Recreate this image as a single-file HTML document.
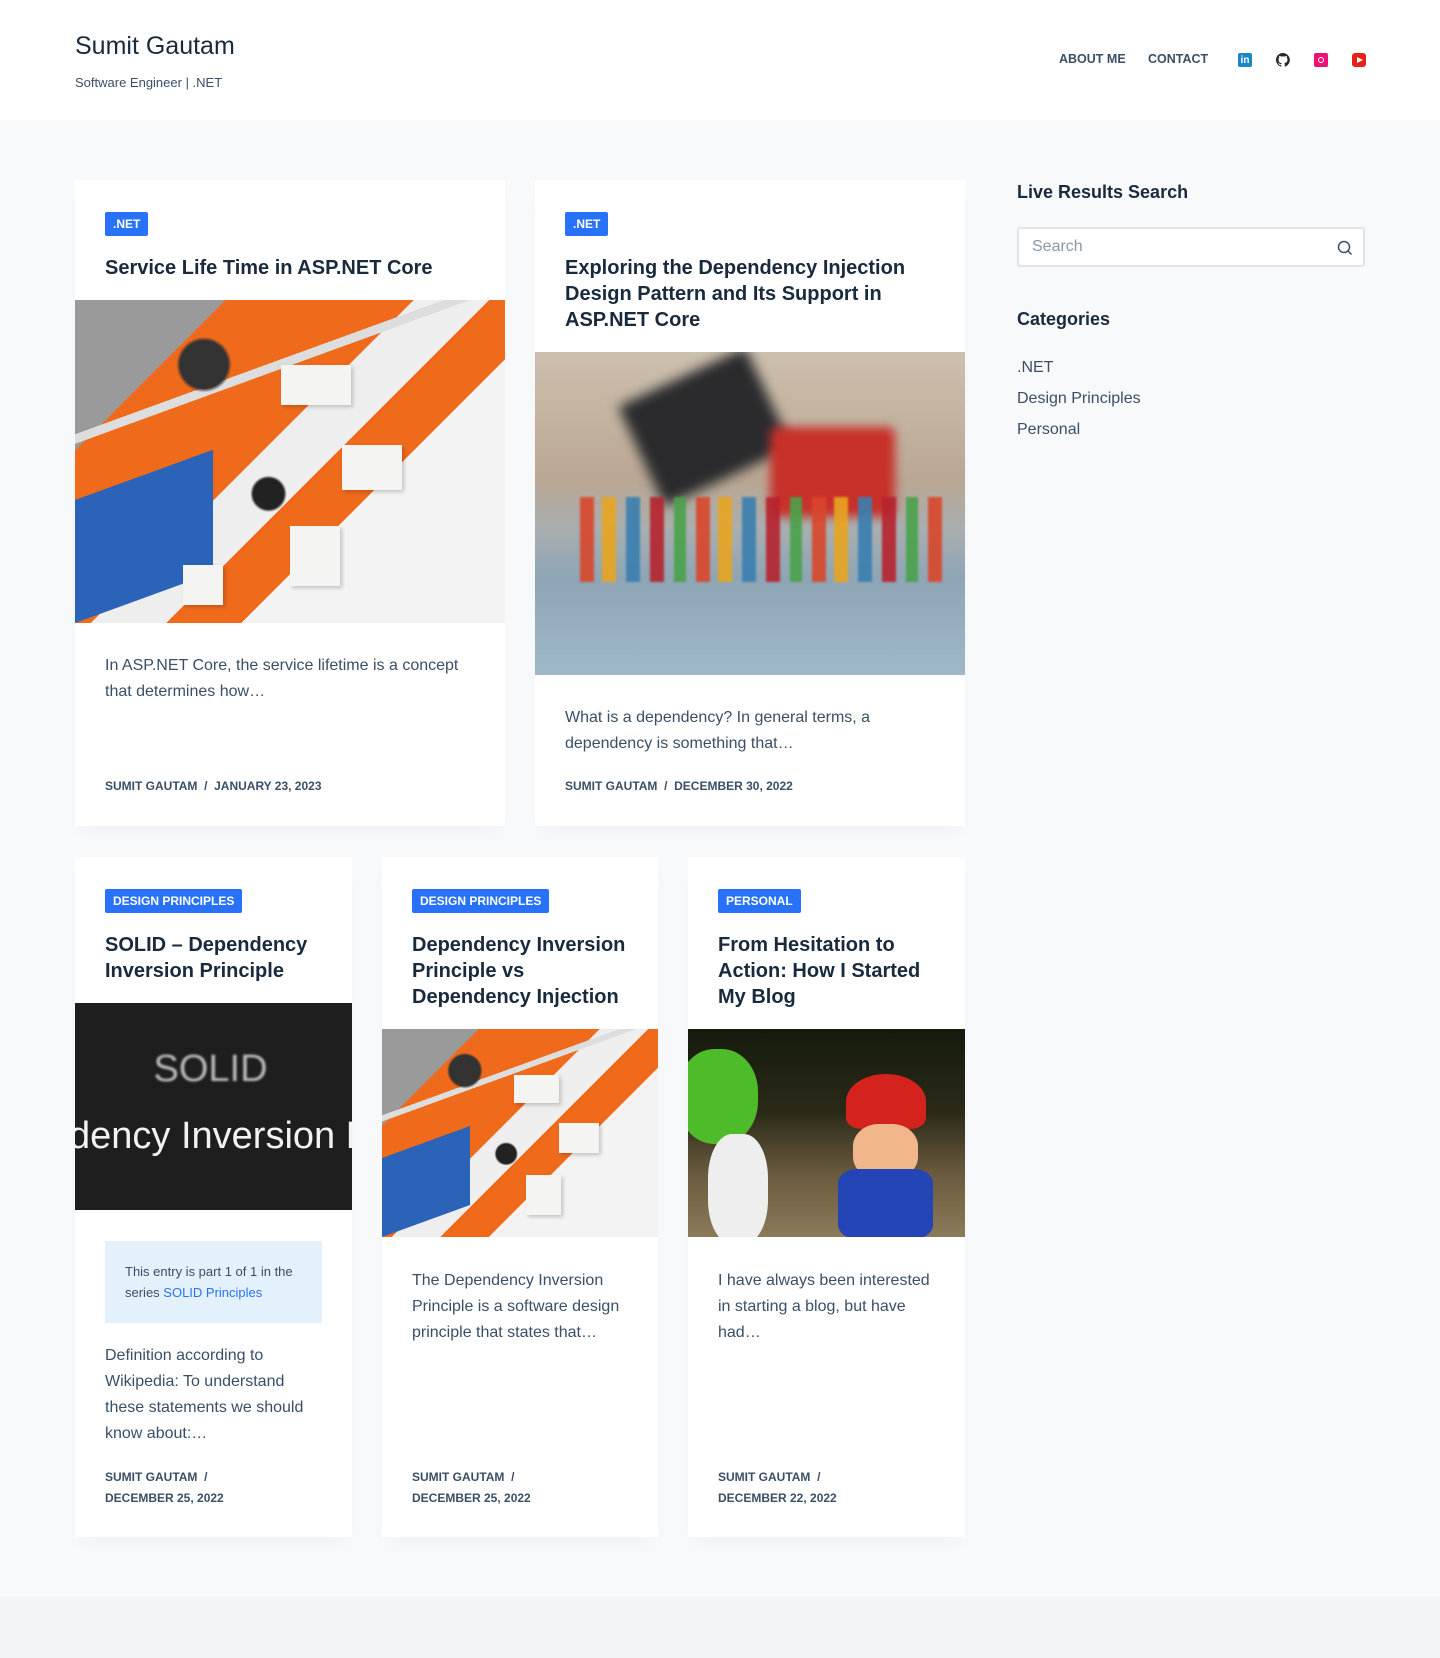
<!DOCTYPE html>
<html><head><meta charset="utf-8"><style>
*{box-sizing:border-box;margin:0;padding:0}
body{width:1440px;height:1658px;background:#f8f9fb;font-family:"Liberation Sans",Arial,sans-serif;color:#3a4f66;position:relative;overflow:hidden}
header{position:absolute;left:0;top:0;width:1440px;height:120px;background:#fff}
.logo{position:absolute;left:75px;top:32px;font-size:25px;color:#192a3d}
.tag{position:absolute;left:75px;top:75px;font-size:13px;color:#3a4f66}
.nav{position:absolute;top:52px;font-size:12.5px;font-weight:bold;color:#3a4f66}
.ic{position:absolute;top:53px;width:14px;height:14px;border-radius:2px}
.card{position:absolute;background:#fff;box-shadow:0 12px 18px -6px rgba(34,56,101,.04)}
.badge{position:absolute;left:30px;height:24px;line-height:24px;padding:0 8px;background:#2872fa;color:#fff;font-size:12px;font-weight:bold;border-radius:2px;text-transform:uppercase}
.title{position:absolute;left:30px;right:20px;font-size:20px;line-height:26px;font-weight:bold;color:#192a3d}
.img{position:absolute;left:0;right:0;overflow:hidden}
.ex{position:absolute;left:30px;right:25px;font-size:16px;line-height:26px;color:#3a4f66}
.meta{position:absolute;left:30px;right:20px;font-size:12px;font-weight:bold;color:#3a4f66;text-transform:uppercase;line-height:21px}
.lego{background:
radial-gradient(circle at 30% 20%,#333 0 6%,transparent 7%),
radial-gradient(circle at 45% 60%,#222 0 5%,transparent 6%),
linear-gradient(160deg,transparent 0 28%,#ddd 28% 30%,transparent 30%),
linear-gradient(135deg,#9a9a9a 0 20%,#f06a1c 20% 45%,#eee 45% 55%,#f06a1c 55% 65%,#f3f3f3 65%),
#f06a1c}
.lego .blue{position:absolute;left:0;bottom:0;width:32%;height:38%;background:#2a63b8;transform:skewY(-20deg);transform-origin:left bottom}
.lego .wh{position:absolute;background:#f4f4f2;box-shadow:2px 2px 4px rgba(0,0,0,.2)}
</style></head><body>
<header>
<div class="logo">Sumit Gautam</div>
<div class="tag">Software Engineer | .NET</div>
<div class="nav" style="left:1059px">ABOUT ME</div>
<div class="nav" style="left:1148px">CONTACT</div>
<div class="ic" style="left:1238px;background:#1c86c6;color:#fff;font-size:10px;font-weight:bold;line-height:15px;text-align:center">in</div>
<svg class="ic" style="left:1276px" viewBox="0 0 16 16"><path fill="#24292f" d="M8 0a8 8 0 0 0-2.5 15.6c.4 0 .5-.2.5-.4v-1.4c-2.2.5-2.7-1-2.7-1-.4-.9-.9-1.2-.9-1.2-.7-.5.1-.5.1-.5.8.1 1.200.8 1.2.8.7 1.3 1.9.9 2.3.7.1-.5.3-.9.5-1.1-1.8-.2-3.6-.9-3.6-4 0-.9.3-1.6.8-2.1-.1-.2-.4-1 .1-2.1 0 0 .7-.2 2.2.8a7.5 7.5 0 0 1 4 0c1.5-1 2.2-.8 2.2-.8.4 1.1.2 1.9.1 2.1.5.6.8 1.3.8 2.1 0 3.1-1.9 3.7-3.600 3.9.3.3.5.8.5 1.5v2.2c0 .2.1.5.6.4A8 8 0 0 0 8 0z"/></svg>
<div class="ic" style="left:1314px;background:#ed1376"><div style="position:absolute;left:4px;top:4px;width:6px;height:6px;border:1.5px solid #fff;border-radius:50%"></div></div>
<div class="ic" style="left:1352px;background:#e62117;border-radius:3px"><div style="position:absolute;left:5px;top:3.5px;border-left:6px solid #fff;border-top:3.5px solid transparent;border-bottom:3.5px solid transparent"></div></div>
</header>

<div class="card" style="left:75px;top:180px;width:430px;height:646px">
<div class="badge" style="top:32px">.NET</div>
<div class="title" style="top:75px">Service Life Time in ASP.NET Core</div>
<div class="img lego" style="top:120px;height:323px"><div class="blue"></div>
<div class="wh" style="left:48%;top:20%;width:70px;height:40px"></div>
<div class="wh" style="left:62%;top:45%;width:60px;height:45px"></div>
<div class="wh" style="left:50%;top:70%;width:50px;height:60px"></div>
<div class="wh" style="left:25%;top:82%;width:40px;height:40px"></div></div>
<div class="ex" style="top:473px">In ASP.NET Core, the service lifetime is a concept that determines how…</div>
<div class="meta" style="top:596px">Sumit Gautam &nbsp;/&nbsp; January 23, 2023</div>
</div>

<div class="card" style="left:535px;top:180px;width:430px;height:646px">
<div class="badge" style="top:32px">.NET</div>
<div class="title" style="top:75px">Exploring the Dependency Injection Design Pattern and Its Support in ASP.NET Core</div>
<div class="img" style="top:172px;height:323px;background:linear-gradient(180deg,#cdbfae 0%,#b9a793 40%,#a8aeb0 55%,#8ea5b5 70%,#9fb8c8 100%)">
<div style="position:absolute;left:100px;top:20px;width:140px;height:110px;background:#2b2b2e;filter:blur(6px);transform:rotate(-25deg)"></div>
<div style="position:absolute;left:235px;top:75px;width:125px;height:90px;background:#c8302a;filter:blur(5px);border-radius:8px"></div>
<div style="position:absolute;left:45px;top:145px;width:370px;height:85px;background:repeating-linear-gradient(90deg,#d9472b 0 14px,transparent 14px 22px,#e8a520 22px 36px,transparent 36px 46px,#3a7fb0 46px 60px,transparent 60px 70px,#b6232f 70px 84px,transparent 84px 94px,#4aa24a 94px 106px,transparent 106px 116px);opacity:.9;filter:blur(1px)"></div>
</div>
<div class="ex" style="top:525px">What is a dependency? In general terms, a dependency is something that…</div>
<div class="meta" style="top:596px">Sumit Gautam &nbsp;/&nbsp; December 30, 2022</div>
</div>

<div class="card" style="left:75px;top:857px;width:277px;height:680px">
<div class="badge" style="top:32px">Design Principles</div>
<div class="title" style="top:75px">SOLID – Dependency Inversion Principle</div>
<div class="img" style="top:146px;height:207px;background:#1e1e1e">
<div style="position:absolute;left:-6px;right:0;top:45px;text-align:center;font-size:38px;color:#bbb;filter:blur(1px)">SOLID</div>
<div style="position:absolute;left:-6px;top:112px;white-space:nowrap;font-size:38px;color:#f2f2f2">dency Inversion P</div>
</div>
<div style="position:absolute;left:30px;top:384px;width:217px;height:82px;background:#e3f1fd;padding:20px 20px;font-size:13px;line-height:21px;color:#3a4f66">This entry is part 1 of 1 in the series <span style="color:#2872fa">SOLID Principles</span></div>
<div class="ex" style="top:486px">Definition according to Wikipedia: To understand these statements we should know about:…</div>
<div class="meta" style="top:610px">Sumit Gautam &nbsp;/<br>December 25, 2022</div>
</div>

<div class="card" style="left:382px;top:857px;width:276px;height:680px">
<div class="badge" style="top:32px">Design Principles</div>
<div class="title" style="top:75px">Dependency Inversion Principle vs Dependency Injection</div>
<div class="img lego" style="top:172px;height:208px"><div class="blue"></div>
<div class="wh" style="left:48%;top:22%;width:45px;height:28px"></div>
<div class="wh" style="left:64%;top:45%;width:40px;height:30px"></div>
<div class="wh" style="left:52%;top:70%;width:35px;height:40px"></div></div>
<div class="ex" style="top:411px">The Dependency Inversion Principle is a software design principle that states that…</div>
<div class="meta" style="top:610px">Sumit Gautam &nbsp;/<br>December 25, 2022</div>
</div>

<div class="card" style="left:688px;top:857px;width:277px;height:680px">
<div class="badge" style="top:32px">Personal</div>
<div class="title" style="top:75px">From Hesitation to Action: How I Started My Blog</div>
<div class="img" style="top:172px;height:208px;background:linear-gradient(180deg,#141a0c 0%,#2b2a18 40%,#6b5b3e 70%,#8b7a5a 100%)">
<div style="position:absolute;left:-10px;top:20px;width:80px;height:95px;background:#4dbb2a;border-radius:45%"></div>
<div style="position:absolute;left:20px;top:105px;width:60px;height:110px;background:#eee;border-radius:40%"></div>
<div style="position:absolute;left:158px;top:45px;width:80px;height:55px;background:#d4231d;border-radius:50% 50% 20% 20%"></div>
<div style="position:absolute;left:165px;top:95px;width:65px;height:55px;background:#f1b68c;border-radius:40%"></div>
<div style="position:absolute;left:150px;top:140px;width:95px;height:70px;background:#2445b5;border-radius:20%"></div>
</div>
<div class="ex" style="top:411px">I have always been interested in starting a blog, but have had…</div>
<div class="meta" style="top:610px">Sumit Gautam &nbsp;/<br>December 22, 2022</div>
</div>

<div style="position:absolute;left:1017px;top:182px;font-size:18px;font-weight:bold;color:#192a3d">Live Results Search</div>
<div style="position:absolute;left:1017px;top:227px;width:348px;height:40px;border:2px solid #e0e5eb;border-radius:3px;background:#fff">
<div style="position:absolute;left:13px;top:9px;font-size:16px;color:#8a97a6">Search</div>
<svg style="position:absolute;right:10px;top:11px" width="16" height="16" viewBox="0 0 16 16"><circle cx="7" cy="7" r="5.5" fill="none" stroke="#3a4f66" stroke-width="1.5"/><path d="M11 11l3.5 3.5" stroke="#3a4f66" stroke-width="1.5"/></svg>
</div>
<div style="position:absolute;left:1017px;top:309px;font-size:18px;font-weight:bold;color:#192a3d">Categories</div>
<div style="position:absolute;left:1017px;top:352px;font-size:16px;line-height:31px;color:#3a4f66">.NET<br>Design Principles<br>Personal</div>

<div style="position:absolute;left:0;top:1597px;width:1440px;height:61px;background:#f2f5f7"></div>
</body></html>
